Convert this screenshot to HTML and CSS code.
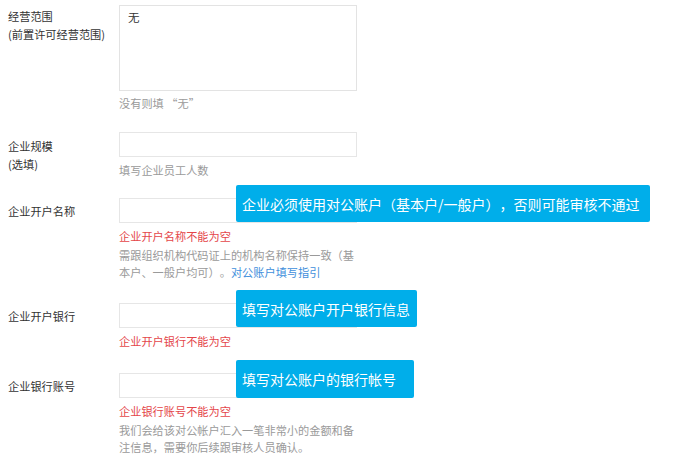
FILE: index.html
```html
<!DOCTYPE html>
<html lang="zh">
<head>
<meta charset="utf-8">
<link rel="stylesheet" href="styles.css">
</head>
<body>
<div class="form">
  <div class="row row-scope">
    <div class="label label-area">经营范围<br>(前置许可经营范围)</div>
    <div class="field">
      <div class="textarea">无</div>
      <div class="hint hint-first">没有则填 “无”</div>
    </div>
  </div>

  <div class="row row-size">
    <div class="label label-two">企业规模<br>(选填)</div>
    <div class="field">
      <div class="input"></div>
      <div class="hint">填写企业员工人数</div>
    </div>
  </div>

  <div class="row row-name">
    <div class="label">企业开户名称</div>
    <div class="field">
      <div class="input"></div>
      <div class="error">企业开户名称不能为空</div>
      <div class="hint hint-multi">需跟组织机构代码证上的机构名称保持一致（基<br>本户、一般户均可）。<a class="link">对公账户填写指引</a></div>
      <div class="tip tip-wide">企业必须使用对公账户（基本户/一般户），否则可能审核不通过</div>
    </div>
  </div>

  <div class="row row-bank">
    <div class="label">企业开户银行</div>
    <div class="field">
      <div class="input"></div>
      <div class="error">企业开户银行不能为空</div>
      <div class="tip tip-bank">填写对公账户开户银行信息</div>
    </div>
  </div>

  <div class="row row-account">
    <div class="label">企业银行账号</div>
    <div class="field">
      <div class="input"></div>
      <div class="error">企业银行账号不能为空</div>
      <div class="hint hint-multi">我们会给该对公帐户汇入一笔非常小的金额和备<br>注信息，需要你后续跟审核人员确认。</div>
      <div class="tip tip-last">填写对公账户的银行帐号</div>
    </div>
  </div>
</div>
</body>
</html>
```

FILE: styles.css
```css
html, body {
  margin: 0;
  padding: 0;
  background: #ffffff;
}

body {
  font-family: "Microsoft YaHei", "Noto Sans CJK SC", "Noto Sans", sans-serif;
  font-size: 11.2px;
  color: #3a3a3a;
  width: 700px;
  height: 459px;
  overflow: hidden;
  text-spacing-trim: space-all;
}

.form {
  display: flex;
  flex-direction: column;
  padding: 5px 0 0 8px;
}

.row {
  display: flex;
  align-items: flex-start;
}

.row-size { margin-top: 20px; }
.row-name { margin-top: 19px; }
.row-bank { margin-top: 22px; }
.row-account { margin-top: 23px; }

.label {
  width: 111px;
  flex: none;
  line-height: 18px;
  padding-top: 4px;
  color: #333333;
}

.label-area { padding-top: 2px; }
.label-two { padding-top: 5px; }

.field {
  position: relative;
  width: 238px;
  display: flex;
  flex-direction: column;
}

.textarea {
  box-sizing: border-box;
  height: 86px;
  border: 1px solid #e3e3e3;
  padding: 2px 8px;
  line-height: 18px;
  font-size: 11.5px;
  color: #333;
}

.input {
  box-sizing: border-box;
  height: 25px;
  border: 1px solid #e6e6e6;
}

.hint {
  color: #9a9a9a;
  line-height: 18px;
  margin-top: 4px;
}

.hint-first { margin-top: 3px; }

.hint-multi {
  line-height: 17px;
  margin-top: 2px;
}

.error {
  color: #e4464a;
  line-height: 18px;
  margin-top: 4px;
}

.link {
  color: #3f8fdc;
  text-decoration: none;
}

.tip {
  position: absolute;
  left: 117px;
  top: -13px;
  height: 37px;
  line-height: 38px;
  padding: 0 7px 0 6px;
  background: #00aeea;
  color: #ffffff;
  font-size: 14px;
  white-space: nowrap;
  border-radius: 2px;
}

.tip-wide { padding-right: 10px; }
.tip-bank { padding-right: 7px; }

.tip-last {
  top: -13px;
  height: 38px;
  line-height: 39px;
  padding-right: 18px;
}
```
